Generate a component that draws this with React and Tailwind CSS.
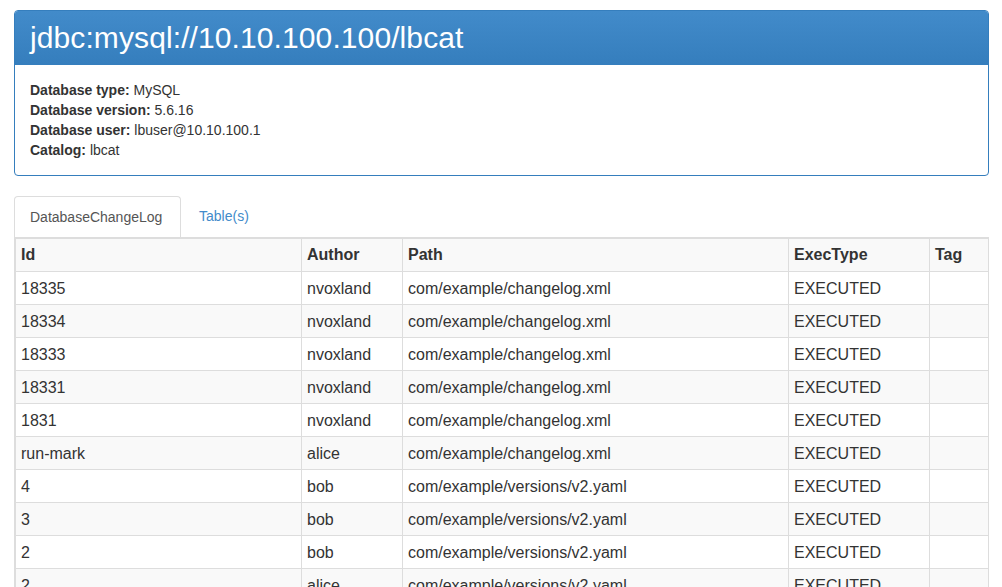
import React from 'react';

const info = [
    ['Database type:', 'MySQL'],
    ['Database version:', '5.6.16'],
    ['Database user:', 'lbuser@10.10.100.1'],
    ['Catalog:', 'lbcat'],
];

const rows = [
    ['18335', 'nvoxland', 'com/example/changelog.xml', 'EXECUTED', ''],
    ['18334', 'nvoxland', 'com/example/changelog.xml', 'EXECUTED', ''],
    ['18333', 'nvoxland', 'com/example/changelog.xml', 'EXECUTED', ''],
    ['18331', 'nvoxland', 'com/example/changelog.xml', 'EXECUTED', ''],
    ['1831', 'nvoxland', 'com/example/changelog.xml', 'EXECUTED', ''],
    ['run-mark', 'alice', 'com/example/changelog.xml', 'EXECUTED', ''],
    ['4', 'bob', 'com/example/versions/v2.yaml', 'EXECUTED', ''],
    ['3', 'bob', 'com/example/versions/v2.yaml', 'EXECUTED', ''],
    ['2', 'bob', 'com/example/versions/v2.yaml', 'EXECUTED', ''],
    ['2', 'alice', 'com/example/versions/v2.yaml', 'EXECUTED', ''],
];

const th = "border border-[#ddd] px-[5px] py-[5px] leading-[22px] text-left align-top";
const td = "border border-[#ddd] px-[5px] pt-[6px] pb-[4px] leading-[22px] text-left align-top";

export default function App() {
    return (
        <div className="w-[1002px] h-[587px] overflow-hidden bg-white text-[#333] font-['Liberation_Sans',Arial,sans-serif]">
            <div className="ml-[14px] w-[975px] pt-[10px]">
                {/* connection panel */}
                <div className="border border-[#357ebd] rounded-[4px] overflow-hidden">
                    <div className="h-[54px] px-[15px] flex items-center bg-gradient-to-b from-[#428bca] to-[#357ebd] border-b border-[#357ebd]">
                        <h1 className="text-[30px] leading-[33px] text-white tracking-[0.1px]">jdbc:mysql://10.10.100.100/lbcat</h1>
                    </div>
                    <div className="px-[15px] py-[15px] text-[14px] leading-[20px]">
                        {info.map(([k, v]) => (
                            <div key={k}>
                                <b>{k}</b> {v}
                            </div>
                        ))}
                    </div>
                </div>

                {/* tabs */}
                <div className="mt-[20px] flex text-[14px] leading-[20px]">
                    <div className="w-[167px] mr-[2px] px-[15px] py-[10px] border border-b-0 border-[#ddd] rounded-t-[4px] text-[#555] bg-white">
                        DatabaseChangeLog
                    </div>
                    <div className="px-[16px] py-[10px] text-[#428bca]">Table(s)</div>
                </div>

                {/* changelog table */}
                <div className="border border-[#ddd] border-b-0">
                    <table className="w-full table-fixed border-collapse text-[16px]">
                        <colgroup>
                            <col className="w-[286px]" />
                            <col className="w-[101px]" />
                            <col className="w-[386px]" />
                            <col className="w-[141px]" />
                            <col className="w-[59px]" />
                        </colgroup>
                        <tbody>
                            <tr className="bg-[#f9f9f9] font-bold">
                                <td className={th}>Id</td>
                                <td className={th}>Author</td>
                                <td className={th}>Path</td>
                                <td className={th}>ExecType</td>
                                <td className={th}>Tag</td>
                            </tr>
                            {rows.map((r, i) => (
                                <tr key={i} className={i % 2 === 1 ? "bg-[#f9f9f9]" : "bg-white"}>
                                    {r.map((c, j) => (
                                        <td key={j} className={td}>{c}</td>
                                    ))}
                                </tr>
                            ))}
                        </tbody>
                    </table>
                </div>
            </div>
        </div>
    );
}
